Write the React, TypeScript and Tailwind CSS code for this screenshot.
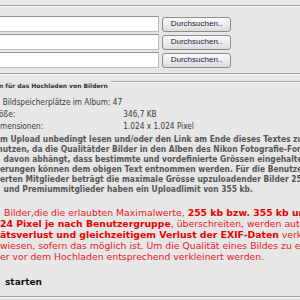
import React from "react";

const Row = () => (
  <div className="flex h-[16px] items-center">
    <div className="-ml-[10px] h-[16px] w-[169px] shrink-0 border border-[#b9bcbb] border-t-[#8e9291] bg-white" />
    <button className="ml-[3px] flex h-[15px] w-[69px] shrink-0 items-center justify-center rounded-[3px] border border-[#8c8c8c] bg-gradient-to-b from-[#fbfbfb] to-[#dcdcdc] font-['Liberation_Sans',Arial,sans-serif] text-[8px] leading-none text-[#1c1c3a]">
      Durchsuchen..
    </button>
  </div>
);

export default function App() {
  return (
    <div className="h-[300px] w-[300px] overflow-hidden bg-[#e5e8e7] font-['DejaVu_Sans',Verdana,sans-serif]">
      <div className="h-[5px]" />
      <div className="h-[2px] border-t border-[#9ea2a1] bg-[#f7f8f8]" />
      <div className="flex flex-col gap-[2px] pt-[9px] pb-[5px]">
        <Row />
        <Row />
        <Row />
      </div>
      <div className="h-[2px] border-t border-[#9ea2a1] bg-[#f7f8f8]" />
      <div className="h-[6px]" />
      {/* fieldset legend + top border */}
      <div className="flex h-[10px] items-start">
        <div className="-ml-[1px] whitespace-nowrap text-[6px] font-bold leading-[10px] text-[#333]">
          n für das Hochladen von Bildern
        </div>
        <div className="ml-[3px] h-[2px] flex-1 border-t border-[#a3a7a6] bg-[#f7f8f8]" />
      </div>
      <div className="h-[5px]" />
      {/* info rows */}
      <div className="origin-left scale-x-[0.9] text-[8.2px] leading-[12px] text-[#3a3a3a]">
        <div className="h-[12px] whitespace-nowrap pl-[3px]">Bildspeicherplätze im Album: 47</div>
        <div className="flex h-[12px] whitespace-nowrap">
          <div className="w-[137px] shrink-0 overflow-hidden">
            <span className="-ml-[1px]">öße:</span>
          </div>
          <div>346,7 KB</div>
        </div>
        <div className="flex h-[12px] whitespace-nowrap">
          <div className="w-[137px] shrink-0 overflow-hidden">mensionen:</div>
          <div>1.024 x 1.024 Pixel</div>
        </div>
      </div>
      <div className="h-[2px]" />
      {/* bold grey paragraph */}
      <div className="origin-left scale-x-[0.9] whitespace-nowrap text-[8.4px] font-bold leading-[10px] text-[#575757]">
        <div>m Upload unbedingt lesen und/oder den Link am Ende dieses Textes zu</div>
        <div className="-ml-[3px]">nutzen, da die Qualitätder Bilder in den Alben des Nikon Fotografie-Forums</div>
        <div className="pl-[4px]">davon abhängt, dass bestimmte und vordefinierte Grössen eingehalten</div>
        <div>erungen können dem obigen Text entnommen werden. Für die Benutzer der</div>
        <div>erten Mitglieder beträgt die maximale Grösse upzuloadender Bilder 250</div>
        <div className="pl-[4px]">und Premiummitglieder haben ein Uploadlimit von 355 kb.</div>
      </div>
      <div className="h-[13px]" />
      {/* red paragraph */}
      <div className="whitespace-nowrap text-[9.3px] leading-[11px] text-[#f0141e]">
        <div className="pl-[4px]">
          Bilder,die die erlaubten Maximalwerte, <span className="font-bold text-[#ee0000]">255 kb bzw. 355 kb und</span>
        </div>
        <div>
          <span className="font-bold text-[#ee0000]">24 Pixel je nach Benutzergruppe</span>, überschreiten, werden automatisch
        </div>
        <div>
          <span className="font-bold text-[#ee0000]">ätsverlust und gleichzeitigem Verlust der EXIF-Daten</span> verkleinert
        </div>
        <div>wiesen, sofern das möglich ist. Um die Qualität eines Bildes zu erhalten</div>
        <div>er vor dem Hochladen entsprechend verkleinert werden.</div>
      </div>
      <div className="h-[14px]" />
      <div className="h-[12px] whitespace-nowrap pl-[5px] text-[9px] font-bold leading-[12px] text-[#111]">
        starten
      </div>
      <div className="h-[8px]" />
      <div className="h-[2px] border-t border-[#9ea2a1] bg-[#f7f8f8]" />
    </div>
  );
}
